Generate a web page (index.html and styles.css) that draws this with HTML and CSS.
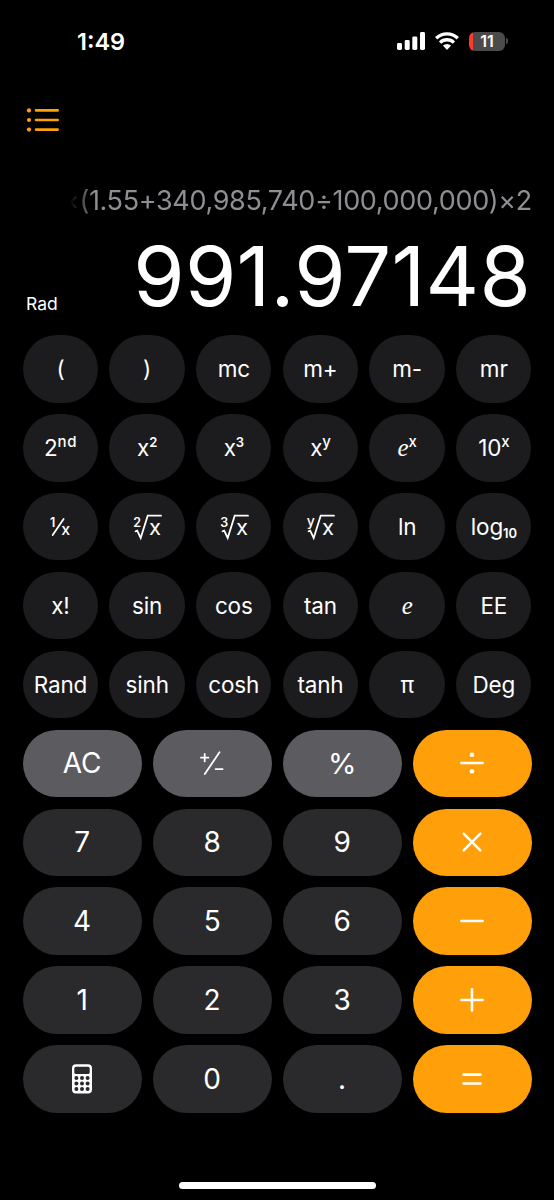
FILE: index.html
```html
<!DOCTYPE html>
<html lang="en">
<head>
<meta charset="utf-8">
<title>Calculator</title>
<link rel="stylesheet" href="styles.css">
</head>
<body>
<main class="phone">
  <header class="status">
    <span class="time">1:49</span>
    <div class="indicators">
      <svg class="signal" width="28" height="18" viewBox="0 0 28 18" fill="#fff"><rect x="0" y="11" width="5" height="7" rx="1.4"/><rect x="7.7" y="8" width="5" height="10" rx="1.4"/><rect x="15.3" y="4.4" width="5" height="13.6" rx="1.4"/><rect x="23" y="0" width="5" height="18" rx="1.4"/></svg>
      <svg class="wifi" width="24" height="18" viewBox="0 0 24 18"><g fill="none" stroke="#fff" stroke-width="3.3"><path d="M1.2 6.3A15.4 15.4 0 0 1 22.8 6.3"/><path d="M5.1 10.6A9.8 9.8 0 0 1 18.9 10.6"/></g><path d="M7.9 13.6Q12 10.4 16.1 13.6L12.7 17.3Q12 18 11.3 17.3Z" fill="#fff"/></svg>
      <div class="battery"><span class="battery-body">11</span><span class="battery-tip"></span></div>
    </div>
  </header>

  <div class="toolbar">
    <svg width="34" height="26" viewBox="0 0 34 26"><g fill="#ff9f0a"><circle cx="3" cy="3.4" r="2.1"/><circle cx="3" cy="13" r="2.1"/><circle cx="3" cy="22.6" r="2.1"/></g><path d="M10 3.4H31.7M10 13H31.7M10 22.6H31.7" stroke="#ff9f0a" stroke-width="2.6" stroke-linecap="round"/></svg>
  </div>

  <section class="display">
    <div class="expression"><span>×(1.55+340,985,740÷100,000,000)×2</span></div>
    <div class="result-row"><span class="mode">Rad</span><span class="result">991.97148</span></div>
  </section>

  <section class="keys">
    <div class="keypad scientific">
      <button class="key fn"><span class="paren">(</span></button><button class="key fn"><span class="paren">)</span></button><button class="key fn">mc</button><button class="key fn">m+</button><button class="key fn">m-</button><button class="key fn">mr</button>
      <button class="key fn"><span>2<sup class="wide">nd</sup></span></button><button class="key fn"><span>x<sup class="num">2</sup></span></button><button class="key fn"><span>x<sup class="num">3</sup></span></button><button class="key fn"><span>x<sup>y</sup></span></button><button class="key fn"><span><i class="euler">e</i><sup>x</sup></span></button><button class="key fn"><span>10<sup>x</sup></span></button>
      <button class="key fn"><svg class="label" width="24" height="26" viewBox="0 0 24 26"><text class="small" x="2" y="13">1</text><path class="line" d="M4.7 21L15.6 5"/><text class="denominator" x="13.2" y="21.4">x</text></svg></button>
      <button class="key fn"><svg class="label" width="30" height="28" viewBox="0 0 30 28"><text class="small" x="1.2" y="14">2</text><path class="line" d="M3.6 18.3L5.2 17.6L8.7 25L15.7 2.7H29"/><text class="radicand" x="17" y="22.2">x</text></svg></button>
      <button class="key fn"><svg class="label" width="30" height="28" viewBox="0 0 30 28"><text class="small" x="1.2" y="14">3</text><path class="line" d="M3.6 18.3L5.2 17.6L8.7 25L15.7 2.7H29"/><text class="radicand" x="17" y="22.2">x</text></svg></button>
      <button class="key fn"><svg class="label" width="30" height="28" viewBox="0 0 30 28"><text class="small index-y" x="1.8" y="13.3">y</text><path class="line" d="M3.6 18.3L5.2 17.6L8.7 25L15.7 2.7H29"/><text class="radicand" x="17" y="22.2">x</text></svg></button>
      <button class="key fn">ln</button><button class="key fn"><span>log<sub>10</sub></span></button>
      <button class="key fn">x!</button><button class="key fn">sin</button><button class="key fn">cos</button><button class="key fn">tan</button><button class="key fn"><i class="euler">e</i></button><button class="key fn">EE</button>
      <button class="key fn">Rand</button><button class="key fn">sinh</button><button class="key fn">cosh</button><button class="key fn">tanh</button><button class="key fn">π</button><button class="key fn">Deg</button>
    </div>
    <div class="keypad basic">
      <button class="key util">AC</button>
      <button class="key util"><svg width="26" height="26" viewBox="0 0 26 26"><path class="line" d="M2 7.7H9.4M5.7 4V11.4M5.8 24L20.5 2.3M16.6 19.1H23.6"/></svg></button>
      <button class="key util"><span class="percent">%</span></button>
      <button class="key op"><svg width="26" height="26" viewBox="0 0 26 26"><path class="op-line" d="M2.4 13H23.6"/><circle cx="13" cy="4.7" r="2.3" fill="#fff"/><circle cx="13" cy="21.3" r="2.3" fill="#fff"/></svg></button>
      <button class="key">7</button><button class="key">8</button><button class="key">9</button>
      <button class="key op"><svg width="26" height="26" viewBox="0 0 26 26"><path class="op-line" d="M4.7 4.7L21.3 21.3M21.3 4.7L4.7 21.3"/></svg></button>
      <button class="key">4</button><button class="key">5</button><button class="key">6</button>
      <button class="key op"><svg width="26" height="26" viewBox="0 0 26 26"><path class="op-line" d="M2.4 13H23.6"/></svg></button>
      <button class="key">1</button><button class="key">2</button><button class="key">3</button>
      <button class="key op"><svg width="26" height="26" viewBox="0 0 26 26"><path class="op-line" d="M2.4 13H23.6M13 2.4V23.6"/></svg></button>
      <button class="key"><svg width="22" height="30" viewBox="0 0 22 30"><path fill="#fff" fill-rule="evenodd" d="M5 .3H17Q21 .3 21 4.3V25.5Q21 29.5 17 29.5H5Q1 29.5 1 25.5V4.3Q1 .3 5 .3ZM5 2.7Q3.3 2.7 3.3 4.4V8.4Q3.3 10 5 10H17Q18.7 10 18.7 8.4V4.4Q18.7 2.7 17 2.7Z"/><g fill="#2a2a2c"><circle cx="5.4" cy="14.1" r="2"/><circle cx="11" cy="14.1" r="2"/><circle cx="16.6" cy="14.1" r="2"/><circle cx="5.4" cy="19.6" r="2"/><circle cx="11" cy="19.6" r="2"/><circle cx="16.6" cy="19.6" r="2"/><circle cx="5.4" cy="25.1" r="2"/><circle cx="11" cy="25.1" r="2"/><circle cx="16.6" cy="25.1" r="2"/></g></svg></button>
      <button class="key">0</button><button class="key">.</button>
      <button class="key op"><svg width="26" height="26" viewBox="0 0 26 26"><path class="op-line" d="M4.4 8.6H21.6M4.4 17.5H21.6"/></svg></button>
    </div>
  </section>
  <div class="home-indicator"></div>
</main>
</body>
</html>
```
FILE: styles.css
```css
* { box-sizing: border-box; }
body { margin: 0; background: #000; color: #fff; font-family: Inter, "Liberation Sans", sans-serif; }
.phone { width: 554px; height: 1200px; display: flex; flex-direction: column; overflow: hidden; background: #000; }
.status { height: 82px; flex: none; display: flex; justify-content: space-between; align-items: center; padding: 0 46px 0 77px; }
.time { font-size: 23.5px; font-weight: 600; padding-top: 1px; }
.indicators { display: flex; align-items: center; gap: 10px; }
.signal, .wifi { display: block; }
.battery { display: flex; align-items: center; gap: 1px; }
.battery-body { width: 36px; height: 19px; border-radius: 6px; background: linear-gradient(90deg, #ff3b30 4px, #4b4b4c 4px); display: flex; align-items: center; justify-content: center; font-size: 16px; font-weight: 600; }
.battery-tip { width: 2px; height: 6px; border-radius: 0 2px 2px 0; background: #4b4b4c; }
.toolbar { height: 78px; flex: none; padding: 25px 0 0 26px; }
.toolbar svg { display: block; }
.display { height: 175.2px; flex: none; padding: 20px 23px 0 26px; }
.expression { height: 40px; margin-right: -1px; display: flex; align-items: center; justify-content: flex-end; color: #8e8e93; font-size: 27px; letter-spacing: -0.34px; white-space: nowrap; }
.expression span { mask-image: linear-gradient(90deg, transparent 8px, #000 32px); }
.result-row { height: 115px; display: flex; align-items: flex-end; justify-content: space-between; }
.mode { font-size: 17.5px; line-height: 22px; padding-bottom: 20px; }
.result { font-size: 83px; font-weight: 400; line-height: 100px; padding-bottom: 9px; letter-spacing: 0.25px; }
.keys { flex: none; padding: 0 22.5px 0 22.8px; display: grid; gap: 11.4px; }
.keypad { display: grid; gap: 11.4px 11.3px; grid-auto-rows: 67.5px; }
.scientific { grid-template-columns: repeat(6, 1fr); }
.basic { grid-template-columns: repeat(4, 1fr); }
.key { min-width: 0; padding: 0; border: 0; border-radius: 34px; background: #2a2a2c; color: #fff; font: 400 28px Inter, "Liberation Sans", sans-serif; display: flex; align-items: center; justify-content: center; }
.key svg { display: block; }
.fn { background: #1c1c1e; font-size: 22.5px; letter-spacing: -0.15px; }
.util { background: #5c5c60; }
.op { background: #ff9f0a; }
.fn sup, .fn sub { font-size: 15px; line-height: 0; font-weight: 500; vertical-align: 9px; }
.fn sub { font-size: 13px; vertical-align: -3px; font-weight: 600; }
.fn .num { font-size: 13px; font-weight: 600; }
.fn .wide { letter-spacing: 0.6px; }
.percent { font-size: 29px; }
.euler { font-family: "Liberation Serif", serif; font-size: 25px; }
.line { fill: none; stroke: #fff; stroke-width: 1.8; stroke-linecap: round; }
.label { overflow: visible; letter-spacing: 0; }
.label text { fill: #fff; font-size: 22px; }
.label .small { font-size: 12.5px; font-weight: 600; }
.label .index-y { font-size: 14px; font-weight: 500; }
.label .denominator { font-size: 16px; font-weight: 500; }
.op-line { fill: none; stroke: #fff; stroke-width: 2.6; stroke-linecap: round; }
.home-indicator { width: 197px; height: 7px; margin: 69px auto 0; border-radius: 4px; background: #fff; }
```
